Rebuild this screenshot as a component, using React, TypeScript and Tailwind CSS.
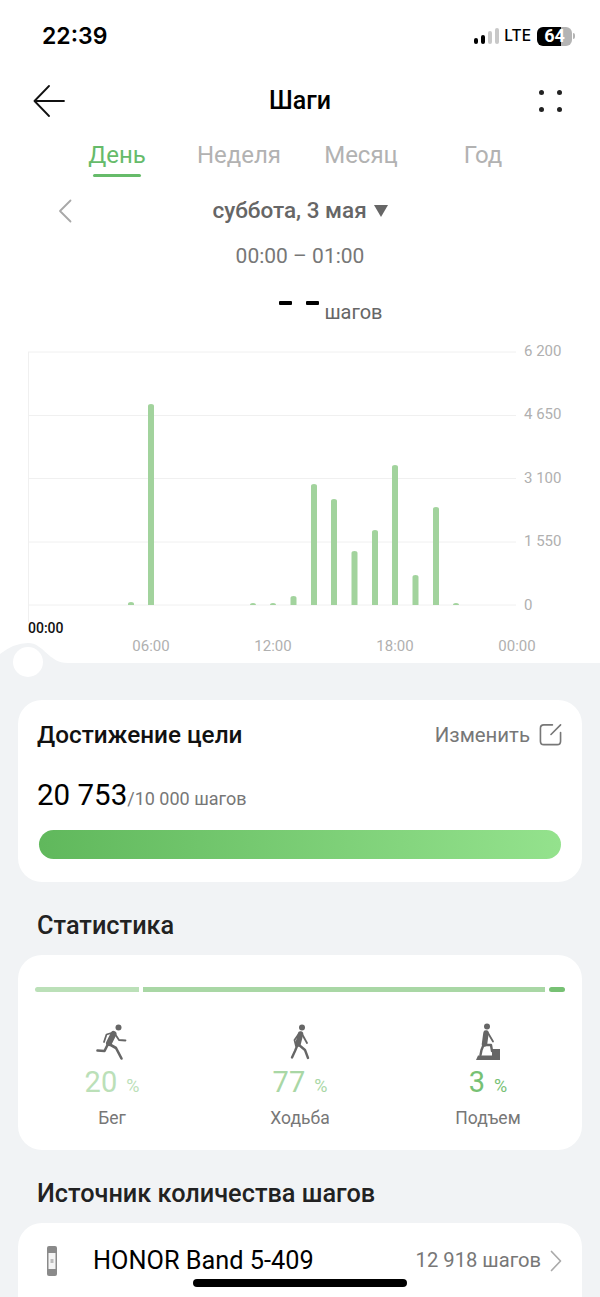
const hours = [
  { x: 131, top: 602 },
  { x: 151, top: 404 },
  { x: 253, top: 603 },
  { x: 273, top: 603 },
  { x: 293.5, top: 596 },
  { x: 314, top: 484 },
  { x: 334, top: 499 },
  { x: 354.5, top: 551 },
  { x: 375, top: 530 },
  { x: 395, top: 465 },
  { x: 415.5, top: 575 },
  { x: 436, top: 507 },
  { x: 456, top: 603 },
];

const yLabels = [
  { y: 352, text: 356, label: "6 200" },
  { y: 415.5, text: 419, label: "4 650" },
  { y: 478.5, text: 483, label: "3 100" },
  { y: 542, text: 546, label: "1 550" },
  { y: 605, text: 610, label: "0" },
];

const xLabels = [
  { x: 151, label: "06:00" },
  { x: 273, label: "12:00" },
  { x: 395, label: "18:00" },
  { x: 517, label: "00:00" },
];

function Chart() {
  return (
    <svg viewBox="0 340 600 323" className="block w-[600px] h-[323px]">
      <line x1="28.5" y1="352" x2="28.5" y2="622" stroke="#f0f0f0" />
      {yLabels.map((l) => (
        <g key={l.label}>
          <line x1="28" y1={l.y} x2="516" y2={l.y} stroke="#f0f0f0" />
          <text x="524" y={l.text} fontSize="15" fill="#b0b0b0">
            {l.label}
          </text>
        </g>
      ))}
      {hours.map((b) => (
        <path
          key={b.x}
          d={`M${b.x - 3} 605 V${b.top + 2} Q${b.x - 3} ${b.top} ${b.x} ${b.top} Q${b.x + 3} ${b.top} ${b.x + 3} ${b.top + 2} V605 Z`}
          fill="#a2d39d"
        />
      ))}
      {xLabels.map((l) => (
        <text key={l.x} x={l.x} y="651" fontSize="15" fill="#b0b0b0" textAnchor="middle">
          {l.label}
        </text>
      ))}
      <text x="28" y="633" fontSize="14" fontWeight="500" fill="#111">
        00:00
      </text>
    </svg>
  );
}

function RunIcon() {
  return (
    <svg viewBox="0 0 36 40" className="w-9 h-10" fill="none" stroke="#666" strokeLinecap="round" strokeLinejoin="round">
      <circle cx="24.5" cy="5.5" r="3" fill="#666" stroke="none" />
      <path d="M19.5 12 L15 21" strokeWidth="6" />
      <path d="M19 10.5 L12.5 12.5 L10 20" strokeWidth="1.8" />
      <path d="M21 12 L25 18 L31.5 18.5" strokeWidth="1.8" />
      <path d="M14 22 L10.5 29 L3.5 28.5" strokeWidth="2.6" />
      <path d="M15 22 L22 26 L27.5 36.5" strokeWidth="2.6" />
    </svg>
  );
}

function WalkIcon() {
  return (
    <svg viewBox="0 0 36 40" className="w-9 h-10" fill="none" stroke="#666" strokeLinecap="round" strokeLinejoin="round">
      <circle cx="20" cy="5.5" r="3" fill="#666" stroke="none" />
      <path d="M18.5 12 L16 22" strokeWidth="5.5" />
      <path d="M20 12 L25 21" strokeWidth="1.8" />
      <path d="M16 13 L12.5 18 L14 24" strokeWidth="1.8" />
      <path d="M15.5 23 L13 29 L10 35.5" strokeWidth="2.4" />
      <path d="M17 23 L23 28 L26 36" strokeWidth="2.4" />
    </svg>
  );
}

function ClimbIcon() {
  return (
    <svg viewBox="0 0 36 40" className="w-9 h-10" fill="none" stroke="#666" strokeLinecap="round" strokeLinejoin="round">
      <circle cx="17" cy="4.5" r="3" fill="#666" stroke="none" />
      <path d="M16 11 L14.5 22" strokeWidth="5.5" />
      <path d="M18 11 L23 19.5" strokeWidth="1.8" />
      <path d="M15 23 L21 23 L22 29" strokeWidth="2.4" />
      <path d="M13.5 23 L11.5 28 L10.5 33" strokeWidth="2.4" />
      <path d="M6 38 L8 33.5 H22 V27 H30 V38 Z" fill="#666" stroke="none" />
    </svg>
  );
}

function Stat({ icon, value, label, color }: { icon: React.ReactNode; value: string; label: string; color: string }) {
  return (
    <div className="flex flex-col items-center">
      {icon}
      <div className={`flex items-baseline gap-[9px] mt-[1px] h-[38px] ${color}`}>
        <span className="text-[29px] font-normal leading-[38px]">{value}</span>
        <span className="text-[18px] font-normal">%</span>
      </div>
      <div className="text-[17.5px] leading-5 text-[#777] mt-[7px]">{label}</div>
    </div>
  );
}

export default function App() {
  return (
    <div className="relative w-[600px] h-[1297px] overflow-hidden bg-white [font-family:Roboto,'Noto_Sans',sans-serif]">
      {/* status bar */}
      <div className="h-[72px] flex items-center justify-between pl-[42px] pr-[25px]">
        <span className="text-[23px] font-semibold text-black [font-family:Inter,sans-serif]">22:39</span>
        <div className="flex items-center">
          <div className="flex items-end gap-[3px] h-[16px] mr-[5px]">
            <span className="w-[4px] h-[6px] rounded-[2px] bg-black" />
            <span className="w-[4px] h-[9px] rounded-[2px] bg-black" />
            <span className="w-[4px] h-[13px] rounded-[2px] bg-[#c8c8c8]" />
            <span className="w-[4px] h-[16px] rounded-[2px] bg-[#c8c8c8]" />
          </div>
          <span className="text-[15.5px] font-medium text-black mr-[6px] [font-family:Inter,sans-serif]">LTE</span>
          <div className="relative w-[35px] h-[19px]">
            <div className="flex w-full h-full rounded-[6px] overflow-hidden">
              <span className="w-[24px] bg-black" />
              <span className="flex-1 bg-[#b4b4b4]" />
            </div>
            <span className="absolute inset-0 flex items-center justify-center text-[18px] leading-none font-bold text-white">64</span>
          </div>
          <span className="ml-[1px] w-[2px] h-[6px] rounded-r-[2px] bg-[#b4b4b4]" />
        </div>
      </div>

      {/* header */}
      <div className="h-[58px] flex items-center justify-between pl-[33px] pr-[38px]">
        <svg viewBox="0 0 32 32" className="w-8 h-8" fill="none" stroke="#111" strokeWidth="1.8" strokeLinecap="round" strokeLinejoin="round">
          <path d="M31 16 H2 M16 1 L1.5 16 L16 31" />
        </svg>
        <span className="text-[25px] font-medium text-black absolute left-0 right-0 text-center">Шаги</span>
        <div className="grid grid-cols-2 gap-x-[13px] gap-y-[12px]">
          <span className="w-[5px] h-[5px] rounded-full bg-[#222]" />
          <span className="w-[5px] h-[5px] rounded-full bg-[#222]" />
          <span className="w-[5px] h-[5px] rounded-full bg-[#222]" />
          <span className="w-[5px] h-[5px] rounded-full bg-[#222]" />
        </div>
      </div>

      {/* tabs */}
      <div className="h-[50px] grid grid-cols-4 px-[56px] text-[24px] text-[#b2b2b2] text-center">
        <div className="flex flex-col items-center">
          <span className="text-[#66bb6a] leading-[50px] h-[44px]">День</span>
          <span className="w-[48px] h-[3px] rounded-full bg-[#66bb6a]" />
        </div>
        <span className="leading-[50px]">Неделя</span>
        <span className="leading-[50px]">Месяц</span>
        <span className="leading-[50px]">Год</span>
      </div>

      {/* date */}
      <div className="relative h-[60px] pt-[1px] flex items-center justify-center text-[22.5px] font-medium text-[#666]">
        <svg viewBox="0 0 14 24" className="absolute left-[58px] w-[14px] h-[24px]" fill="none" stroke="#a8a8a8" strokeWidth="1.8" strokeLinecap="round" strokeLinejoin="round">
          <path d="M12.5 1.5 L2 12 L12.5 22.5" />
        </svg>
        <span>суббота, 3 мая</span>
        <svg viewBox="0 0 14 12" className="w-[14px] h-[12px] ml-[7px]">
          <path d="M0 0 H14 L7 12 Z" fill="#666" />
        </svg>
      </div>

      <div className="h-[32px] leading-[32px] text-center text-[21px] text-[#777]">00:00 – 01:00</div>

      <div className="h-[68px] flex justify-center pl-[62px] gap-[5px]">
        <div className="flex gap-[14px] pt-[29px]">
          <span className="w-[13px] h-[4px] rounded-[1px] bg-black" />
          <span className="w-[13px] h-[4px] rounded-[1px] bg-black" />
        </div>
        <span className="text-[20px] leading-5 text-[#666] pt-[30px]">шагов</span>
      </div>

      <Chart />

      {/* lower panel */}
      <div className="bg-[#f1f3f5] h-[634px] px-[18px] pt-[37px]">
        <div className="bg-white rounded-[24px] h-[182px] pl-[19px] pr-[20px] pt-[19px]">
          <div className="flex items-center justify-between h-[32px]">
            <span className="text-[24.3px] font-medium text-[#111]">Достижение цели</span>
            <div className="flex items-center gap-[9px] text-[20.4px] text-[#777]">
              Изменить
              <svg viewBox="0 0 24 24" className="w-[23px] h-[23px]" fill="none" stroke="#777" strokeWidth="1.7" strokeLinecap="round" strokeLinejoin="round">
                <path d="M14 2 H5 Q1.5 2 1.5 5.5 V19 Q1.5 22.5 5 22.5 H19 Q22.5 22.5 22.5 19 V10" />
                <path d="M12.5 12 L22.5 2" />
              </svg>
            </div>
          </div>
          <div className="flex items-baseline h-[44px] mt-[22px]">
            <span className="text-[29.5px] text-black leading-[44px]">20 753</span>
            <span className="text-[18px] text-[#777]">/10 000 шагов</span>
          </div>
          <div className="mt-[13px] ml-[2px] mr-[1px] h-[29px] rounded-full bg-[linear-gradient(90deg,#60b85c,#94e28d)]" />
        </div>

        <h2 className="text-[25.3px] font-medium text-[#222] mx-[19px] mt-[26px] h-[37px] leading-[36px]">Статистика</h2>

        <div className="bg-white rounded-[24px] h-[195px] px-[17px] pt-[32px] mt-[10px]">
          <div className="flex gap-[4px] h-[5px]">
            <span className="w-[104px] rounded-l-full bg-[#bbe0b8]" />
            <span className="w-[402px] bg-[#a9d7a5]" />
            <span className="w-[16px] rounded-full bg-[#77c174]" />
          </div>
          <div className="grid grid-cols-3 mt-[30px] -mx-[17px]">
            <Stat icon={<RunIcon />} value="20" label="Бег" color="text-[#bbe0b8]" />
            <Stat icon={<WalkIcon />} value="77" label="Ходьба" color="text-[#a9d7a5]" />
            <Stat icon={<ClimbIcon />} value="3" label="Подъем" color="text-[#77c174]" />
          </div>
        </div>

        <h2 className="text-[25.3px] font-medium text-[#222] mx-[19px] mt-[26px] h-[37px] leading-[36px]">Источник количества шагов</h2>

        <div className="bg-white rounded-t-[24px] h-[200px] mt-[10px] pl-[29px] pr-[20px]">
          <div className="h-[74px] pt-[1px] flex items-center">
            <svg viewBox="0 0 10 30" className="w-[10px] h-[30px] mr-[36px]">
              <rect x="0" y="0" width="10" height="30" rx="2" fill="#8a8a8a" />
              <rect x="1.5" y="7" width="7" height="16" fill="#f4f4f4" />
              <rect x="3.5" y="13" width="3" height="4" fill="#bbb" />
            </svg>
            <span className="text-[25.3px] text-black flex-1">HONOR Band 5-409</span>
            <span className="text-[20.2px] text-[#777] mr-[9px]">12 918 шагов</span>
            <svg viewBox="0 0 12 22" className="w-[12px] h-[22px]" fill="none" stroke="#aaa" strokeWidth="1.7" strokeLinecap="round" strokeLinejoin="round">
              <path d="M1.5 1.5 L10.5 11 L1.5 20.5" />
            </svg>
          </div>
        </div>
      </div>

      {/* knob on the day slider */}
      <svg viewBox="0 0 70 40" className="absolute left-0 top-[640px] w-[70px] h-[40px]">
        <path d="M0 14 Q14 3 28 3 C44 3 48 23 68 23 V40 H0 Z" fill="#f1f3f5" />
        <circle cx="28" cy="22" r="15" fill="#fff" />
      </svg>

      {/* home indicator */}
      <div className="absolute left-[193px] top-[1279px] w-[214px] h-[8px] rounded-full bg-black" />
    </div>
  );
}
